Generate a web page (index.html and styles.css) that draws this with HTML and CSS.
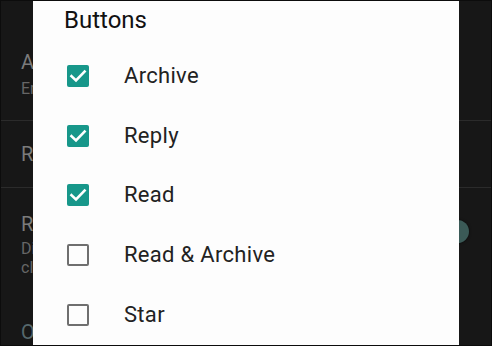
FILE: index.html
```html
<!DOCTYPE html>
<html>
<head>
<meta charset="utf-8">
<link rel="stylesheet" href="styles.css">
</head>
<body>
<div class="screen">
  <div class="settings">
    <div class="setting divided first">
      <div class="s-title">Archive or delete</div>
      <div class="s-sub">Email notification actions</div>
    </div>
    <div class="setting divided second">
      <div class="s-title">Reply actions</div>
    </div>
    <div class="setting third">
      <div class="s-text">
        <div class="s-title">Read on lock screen</div>
        <div class="s-sub">Dismiss notifications when</div>
        <div class="s-sub">clicked</div>
      </div>
      <div class="knob"></div>
    </div>
    <div class="setting fourth">
      <div class="s-title section">Other</div>
    </div>
  </div>

  <div class="dialog">
    <div class="d-title">Buttons</div>
    <div class="option">
      <span class="box checked"><svg viewBox="0 0 22 22" width="22" height="22"><path d="M4.5 11.2 L9 15.4 L17.6 6.6" fill="none" stroke="#fff" stroke-width="2.6" stroke-linecap="square"/></svg></span>
      <span class="label">Archive</span>
    </div>
    <div class="option">
      <span class="box checked"><svg viewBox="0 0 22 22" width="22" height="22"><path d="M4.5 11.2 L9 15.4 L17.6 6.6" fill="none" stroke="#fff" stroke-width="2.6" stroke-linecap="square"/></svg></span>
      <span class="label">Reply</span>
    </div>
    <div class="option">
      <span class="box checked"><svg viewBox="0 0 22 22" width="22" height="22"><path d="M4.5 11.2 L9 15.4 L17.6 6.6" fill="none" stroke="#fff" stroke-width="2.6" stroke-linecap="square"/></svg></span>
      <span class="label">Read</span>
    </div>
    <div class="option">
      <span class="box"></span>
      <span class="label">Read &amp; Archive</span>
    </div>
    <div class="option">
      <span class="box"></span>
      <span class="label">Star</span>
    </div>
  </div>
</div>
</body>
</html>
```

FILE: styles.css
```css
html, body {
  margin: 0;
  padding: 0;
  background: #171717;
}

.screen {
  position: relative;
  width: 492px;
  height: 346px;
  box-sizing: border-box;
  border: 1px solid #0c0c0c;
  background: #171717;
  overflow: hidden;
  font-family: Roboto, "Noto Sans", sans-serif;
}

.settings {
  display: flex;
  flex-direction: column;
}

.setting {
  padding-left: 20px;
  padding-right: 12px;
  box-sizing: border-box;
}

.divided {
  border-bottom: 1px solid #2b2b2b;
}

.first {
  height: 120px;
  padding-top: 49px;
}

.second {
  height: 67px;
  padding-top: 21px;
}

.third {
  height: 112px;
  padding-top: 24px;
  display: flex;
  align-items: flex-start;
  justify-content: space-between;
}

.fourth {
  padding-top: 20px;
}

.s-title {
  font-size: 20px;
  line-height: 24px;
  color: #7b7b7b;
  white-space: nowrap;
}

.s-title.section {
  color: #56686c;
}

.s-sub {
  font-size: 16px;
  line-height: 19px;
  color: #666;
  white-space: nowrap;
}

.first .s-sub {
  margin-top: 5px;
}

.third .s-title {
  margin-bottom: 3px;
}

.knob {
  width: 23px;
  height: 23px;
  border-radius: 50%;
  background: #3b5a57;
  box-shadow: 0 0 3px rgba(0, 0, 0, 0.6);
  margin-top: 8px;
  margin-right: 10px;
  flex: none;
}

.dialog {
  position: absolute;
  left: 32px;
  top: 0;
  width: 426px;
  height: 344px;
  background: #fdfdfd;
  box-sizing: border-box;
  padding-top: 5px;
  display: flex;
  flex-direction: column;
}

.d-title {
  font-size: 24px;
  line-height: 28px;
  font-weight: 400;
  color: #111;
  padding-left: 31px;
  margin-bottom: 12px;
}

.option {
  height: 60px;
  display: flex;
  align-items: center;
  padding-left: 34px;
  gap: 35px;
}

.box {
  width: 22px;
  height: 22px;
  box-sizing: border-box;
  border: 2.5px solid #6f6f6f;
  border-radius: 2px;
  flex: none;
  display: block;
}

.box.checked {
  border: none;
  background: #17978a;
}

.box svg {
  display: block;
}

.label {
  font-size: 22px;
  line-height: 24px;
  letter-spacing: 0.3px;
  color: #222;
}
```
